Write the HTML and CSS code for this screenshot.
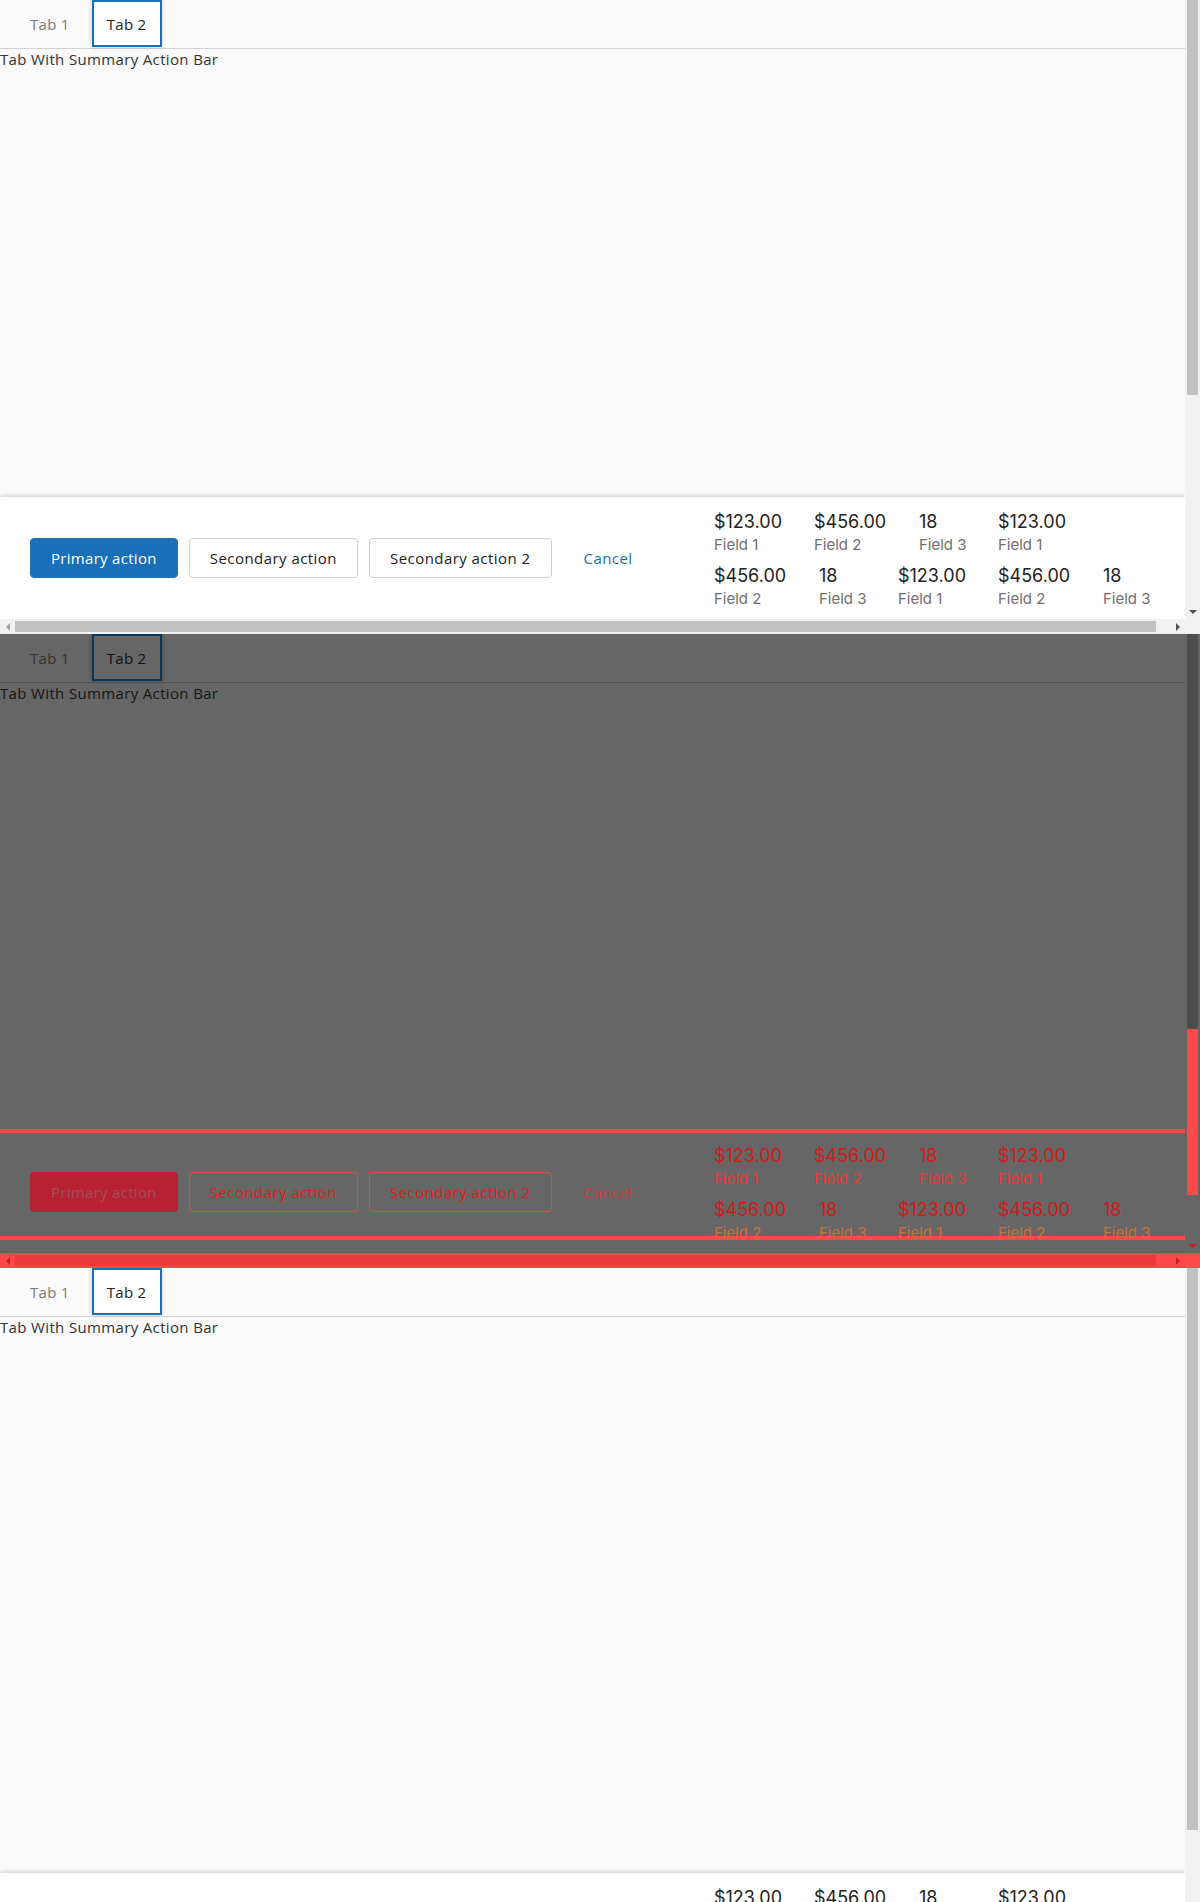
FILE: index.html
```html
<!DOCTYPE html>
<html lang="en">
<head>
<meta charset="utf-8">
<title>Tab With Summary Action Bar</title>
<link rel="stylesheet" href="styles.css">
</head>
<body>
<div class="frame">

  <section class="panel">
    <div class="panel-main">
      <div class="viewport">
        <div class="tabs">
          <div class="tab">Tab 1</div>
          <div class="tab tab-active">Tab 2</div>
        </div>
        <div class="content"><div class="title">Tab With Summary Action Bar</div></div>
        <div class="action-bar">
          <div class="actions">
            <div class="btn btn-primary">Primary action</div>
            <div class="btn">Secondary action</div>
            <div class="btn">Secondary action 2</div>
            <div class="btn btn-link">Cancel</div>
          </div>
          <div class="summary">
            <div class="sum-item w-a"><span class="sum-value">$123.00</span><span class="sum-label">Field 1</span></div>
            <div class="sum-item w-b"><span class="sum-value">$456.00</span><span class="sum-label">Field 2</span></div>
            <div class="sum-item w-c"><span class="sum-value">18</span><span class="sum-label">Field 3</span></div>
            <div class="sum-item w-a"><span class="sum-value">$123.00</span><span class="sum-label">Field 1</span></div>
            <div class="sum-item w-b low"><span class="sum-value">$456.00</span><span class="sum-label">Field 2</span></div>
            <div class="sum-item w-c low"><span class="sum-value">18</span><span class="sum-label">Field 3</span></div>
            <div class="sum-item w-a low"><span class="sum-value">$123.00</span><span class="sum-label">Field 1</span></div>
            <div class="sum-item w-b low"><span class="sum-value">$456.00</span><span class="sum-label">Field 2</span></div>
            <div class="sum-item w-c low"><span class="sum-value">18</span><span class="sum-label">Field 3</span></div>
          </div>
        </div>
      </div>
      <div class="vscroll">
        <div class="vthumb"></div>
        <div class="vfill"></div>
        <div class="varrow"><span class="tri-down"></span></div>
      </div>
    </div>
    <div class="hscroll">
      <div class="harrow"><span class="tri-left"></span></div>
      <div class="htrack"><div class="hthumb"></div></div>
      <div class="harrow"><span class="tri-right"></span></div>
      <div class="corner"></div>
    </div>
  </section>

  <section class="panel diff">
    <div class="panel-main">
      <div class="viewport">
        <div class="tabs">
          <div class="tab">Tab 1</div>
          <div class="tab tab-active">Tab 2</div>
        </div>
        <div class="content"><div class="title">Tab With Summary Action Bar</div></div>
        <div class="action-bar">
          <div class="actions">
            <div class="btn btn-primary">Primary action</div>
            <div class="btn">Secondary action</div>
            <div class="btn">Secondary action 2</div>
            <div class="btn btn-link">Cancel</div>
          </div>
          <div class="summary">
            <div class="sum-item w-a"><span class="sum-value">$123.00</span><span class="sum-label">Field 1</span></div>
            <div class="sum-item w-b"><span class="sum-value">$456.00</span><span class="sum-label">Field 2</span></div>
            <div class="sum-item w-c"><span class="sum-value">18</span><span class="sum-label">Field 3</span></div>
            <div class="sum-item w-a"><span class="sum-value">$123.00</span><span class="sum-label">Field 1</span></div>
            <div class="sum-item w-b low"><span class="sum-value">$456.00</span><span class="sum-label">Field 2</span></div>
            <div class="sum-item w-c low"><span class="sum-value">18</span><span class="sum-label">Field 3</span></div>
            <div class="sum-item w-a low"><span class="sum-value">$123.00</span><span class="sum-label">Field 1</span></div>
            <div class="sum-item w-b low"><span class="sum-value">$456.00</span><span class="sum-label">Field 2</span></div>
            <div class="sum-item w-c low"><span class="sum-value">18</span><span class="sum-label">Field 3</span></div>
          </div>
        </div>
      </div>
      <div class="vscroll">
        <div class="vthumb"></div>
        <div class="vthumb-red"></div>
        <div class="vfill"></div>
        <div class="varrow"><span class="tri-down"></span></div>
      </div>
    </div>
    <div class="hscroll">
      <div class="harrow"><span class="tri-left"></span></div>
      <div class="htrack"><div class="hthumb"></div></div>
      <div class="harrow"><span class="tri-right"></span></div>
      <div class="corner"></div>
    </div>
  </section>

  <section class="panel tall">
    <div class="panel-main">
      <div class="viewport">
        <div class="tabs">
          <div class="tab">Tab 1</div>
          <div class="tab tab-active">Tab 2</div>
        </div>
        <div class="content"><div class="title">Tab With Summary Action Bar</div></div>
        <div class="action-bar">
          <div class="actions">
            <div class="btn btn-primary">Primary action</div>
            <div class="btn">Secondary action</div>
            <div class="btn">Secondary action 2</div>
            <div class="btn btn-link">Cancel</div>
          </div>
          <div class="summary">
            <div class="sum-item w-a"><span class="sum-value">$123.00</span><span class="sum-label">Field 1</span></div>
            <div class="sum-item w-b"><span class="sum-value">$456.00</span><span class="sum-label">Field 2</span></div>
            <div class="sum-item w-c"><span class="sum-value">18</span><span class="sum-label">Field 3</span></div>
            <div class="sum-item w-a"><span class="sum-value">$123.00</span><span class="sum-label">Field 1</span></div>
            <div class="sum-item w-b low"><span class="sum-value">$456.00</span><span class="sum-label">Field 2</span></div>
            <div class="sum-item w-c low"><span class="sum-value">18</span><span class="sum-label">Field 3</span></div>
            <div class="sum-item w-a low"><span class="sum-value">$123.00</span><span class="sum-label">Field 1</span></div>
            <div class="sum-item w-b low"><span class="sum-value">$456.00</span><span class="sum-label">Field 2</span></div>
            <div class="sum-item w-c low"><span class="sum-value">18</span><span class="sum-label">Field 3</span></div>
          </div>
        </div>
      </div>
      <div class="vscroll">
        <div class="vthumb"></div>
        <div class="vfill"></div>
      </div>
    </div>
  </section>

</div>
</body>
</html>
```

FILE: styles.css
```css
* { box-sizing: border-box; }

html, body {
  margin: 0;
  padding: 0;
  background: #ffffff;
}

body {
  font-family: "Open Sans", "Noto Sans", "DejaVu Sans", sans-serif;
  color: #333333;
}

.frame {
  width: 1200px;
  display: flex;
  flex-direction: column;
}

/* ---------- panel shell ---------- */
.panel {
  width: 1200px;
  height: 634px;
  display: flex;
  flex-direction: column;
  overflow: hidden;
  flex: none;
}

.panel-main {
  display: flex;
  align-items: flex-start;
  height: 619px;
  flex: none;
  overflow: hidden;
}

.tall .panel-main {
  height: 634px;
}

.viewport {
  width: 1185px;
  height: 619px;
  flex: none;
  display: flex;
  flex-direction: column;
  background: #fafafa;
}

.tall .viewport {
  height: 727px;
}

/* ---------- tabs ---------- */
.tabs {
  height: 49px;
  flex: none;
  display: flex;
  align-items: flex-start;
  gap: 7px;
  padding-left: 15px;
  border-bottom: 1px solid #d2d2d2;
}

.tab {
  height: 47px;
  padding: 0 13px;
  display: flex;
  align-items: center;
  font-size: 15px;
  letter-spacing: 0.3px;
  color: #7a7a7a;
  border: 2px solid transparent;
}

.tab-active {
  color: #222222;
  background: #ffffff;
  border-color: #1b6fb8;
  box-shadow: 0 0 4px rgba(0, 0, 0, 0.2);
}

/* ---------- content ---------- */
.content {
  flex: 1;
}

.title {
  font-size: 15px;
  letter-spacing: 0.35px;
  color: #333333;
}

/* ---------- action bar ---------- */
.action-bar {
  height: 122px;
  flex: none;
  display: flex;
  align-items: center;
  padding: 0 30px;
  background: #ffffff;
  box-shadow: 0 -1px 4px rgba(0, 0, 0, 0.22);
}

.actions {
  display: flex;
  gap: 11px;
}

.btn {
  height: 40px;
  padding: 0 20px;
  display: flex;
  align-items: center;
  border: 1px solid #cfcfcf;
  border-radius: 4px;
  background: #ffffff;
  color: #222222;
  font-size: 15px;
  letter-spacing: 0.45px;
  white-space: nowrap;
}

.btn-primary {
  background: #1b6fb8;
  border-color: #1b6fb8;
  color: #ffffff;
  letter-spacing: 0.3px;
}

.btn-link {
  background: transparent;
  border-color: transparent;
  color: #1b6fb8;
}

/* ---------- summary ---------- */
.summary {
  margin-left: auto;
  width: 441px;
  align-self: flex-start;
  padding-top: 14px;
  display: flex;
  flex-wrap: wrap;
  column-gap: 30px;
  row-gap: 11px;
}

.sum-item {
  display: flex;
  flex-direction: column;
  flex: none;
  white-space: nowrap;
}

.w-a { width: 70px; }
.w-b { width: 75px; }
.w-c { width: 49px; }

.sum-value {
  font-family: "Inter", "Lato", sans-serif;
  font-size: 18px;
  line-height: 22px;
  color: #222222;
}

.sum-label {
  font-family: "Inter", "Lato", sans-serif;
  font-size: 15px;
  line-height: 18px;
  margin-top: 3px;
  color: #707070;
}

/* ---------- scrollbars ---------- */
.vscroll {
  width: 15px;
  height: 619px;
  flex: none;
  display: flex;
  flex-direction: column;
  padding: 0 2px;
  background: #f1f1f1;
}

.tall .vscroll {
  height: 634px;
}

.vthumb {
  height: 395px;
  flex: none;
  background: #c1c1c1;
}

.tall .vthumb {
  height: 562px;
}

.vthumb-red {
  height: 166px;
  flex: none;
  background: #ff4a4a;
}

.vfill {
  flex: 1;
}

.varrow {
  height: 15px;
  flex: none;
  display: flex;
  align-items: center;
  justify-content: center;
}

.tri-down {
  width: 0;
  height: 0;
  border-left: 4px solid transparent;
  border-right: 4px solid transparent;
  border-top: 4px solid #505050;
}

.hscroll {
  height: 15px;
  flex: none;
  display: flex;
  background: #f1f1f1;
}

.harrow {
  width: 15px;
  flex: none;
  display: flex;
  align-items: center;
  justify-content: center;
}

.tri-left {
  width: 0;
  height: 0;
  border-top: 4px solid transparent;
  border-bottom: 4px solid transparent;
  border-right: 4px solid #a3a3a3;
}

.tri-right {
  width: 0;
  height: 0;
  border-top: 4px solid transparent;
  border-bottom: 4px solid transparent;
  border-left: 4px solid #505050;
}

.htrack {
  width: 1155px;
  flex: none;
  padding: 2px 0;
}

.hthumb {
  width: 1141px;
  height: 11px;
  background: #c1c1c1;
}

.corner {
  width: 15px;
  flex: none;
  background: #f1f1f1;
}

/* ---------- diff panel ---------- */
.diff .viewport {
  background: #666666;
}

.diff .tabs {
  border-bottom-color: #545454;
}

.diff .tab {
  color: #333333;
}

.diff .tab-active {
  color: #111111;
  background: #666666;
  border-color: #0d3558;
  box-shadow: 0 0 4px rgba(0, 0, 0, 0.3);
}

.diff .title {
  color: #151515;
}

.diff .action-bar {
  background: linear-gradient(to bottom,
    #ff4848 0, #ff4848 2px,
    #666666 2px, #666666 105px,
    #ff4848 105px, #ff4848 109px,
    #666666 109px);
  box-shadow: 0 -2px 0 #ff4848;
}

.diff .btn {
  background: transparent;
  border-color: #e84545;
  color: #e11c1c;
}

.diff .btn-primary {
  background: #b82035;
  border-color: #b82035;
  color: #a0525a;
}

.diff .btn-link {
  background: transparent;
  border-color: transparent;
  color: #c93c3c;
}

.diff .sum-value {
  color: #d01a1a;
}

.diff .sum-label {
  color: #e63a3a;
}

.diff .low .sum-label {
  color: #c9703c;
}

.diff .vscroll {
  background: #666666;
}

.diff .vthumb {
  background: #4d4d4d;
}

.diff .tri-down {
  border-top-color: #c81e1e;
}

.diff .hscroll {
  background: #ff4848;
}

.diff .hthumb {
  background: #ec3a3a;
}

.diff .tri-left {
  border-right-color: #c02020;
}

.diff .tri-right {
  border-left-color: #c02020;
}

.diff .corner {
  background: #ff4a4a;
}
```
